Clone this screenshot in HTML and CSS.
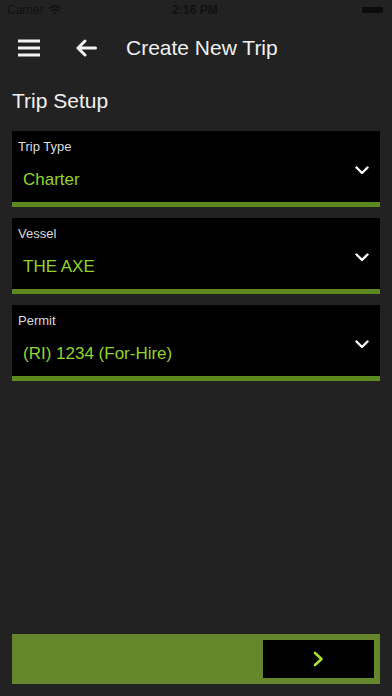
FILE: index.html
```html
<!DOCTYPE html>
<html>
<head>
<meta charset="utf-8">
<link rel="stylesheet" href="styles.css">
</head>
<body>
<div class="screen">
  <div class="status">
    <div class="status-left">Carrier
      <svg class="wifi" width="14" height="10" viewBox="0 0 14 10"><path d="M1 3.5 A9 9 0 0 1 13 3.5" stroke="#111" stroke-width="1.6" fill="none"/><path d="M3.3 5.8 A6 6 0 0 1 10.7 5.8" stroke="#111" stroke-width="1.6" fill="none"/><path d="M7 9.5 L5.2 7.8 A3 3 0 0 1 8.8 7.8 Z" fill="#111"/></svg>
    </div>
    <div class="status-time">2:16 PM</div>
    <div class="status-right"><span class="battery"></span></div>
  </div>
  <div class="nav">
    <svg class="icon-menu" width="22" height="18" viewBox="0 0 22 18"><rect x="0" y="0.5" width="22" height="3" fill="#f2f2f2"/><rect x="0" y="7.5" width="22" height="3" fill="#f2f2f2"/><rect x="0" y="14.5" width="22" height="3" fill="#f2f2f2"/></svg>
    <svg class="icon-back" width="22" height="18" viewBox="0 0 22 18"><path d="M20.5 9 H3 M10 2 L3 9 L10 16" stroke="#f2f2f2" stroke-width="3" fill="none" stroke-linecap="round" stroke-linejoin="round"/></svg>
    <div class="nav-title">Create New Trip</div>
  </div>
  <div class="section-title">Trip Setup</div>
  <div class="fields">
    <div class="field">
      <div class="field-body">
        <div class="field-text">
          <div class="field-label">Trip Type</div>
          <div class="field-value">Charter</div>
        </div>
        <svg class="chev" width="14" height="9" viewBox="0 0 14 9"><path d="M1.5 1.5 L7 7 L12.5 1.5" stroke="#fff" stroke-width="2.4" fill="none" stroke-linecap="round" stroke-linejoin="round"/></svg>
      </div>
    </div>
    <div class="field">
      <div class="field-body">
        <div class="field-text">
          <div class="field-label">Vessel</div>
          <div class="field-value">THE AXE</div>
        </div>
        <svg class="chev" width="14" height="9" viewBox="0 0 14 9"><path d="M1.5 1.5 L7 7 L12.5 1.5" stroke="#fff" stroke-width="2.4" fill="none" stroke-linecap="round" stroke-linejoin="round"/></svg>
      </div>
    </div>
    <div class="field">
      <div class="field-body">
        <div class="field-text">
          <div class="field-label">Permit</div>
          <div class="field-value">(RI) 1234 (For-Hire)</div>
        </div>
        <svg class="chev" width="14" height="9" viewBox="0 0 14 9"><path d="M1.5 1.5 L7 7 L12.5 1.5" stroke="#fff" stroke-width="2.4" fill="none" stroke-linecap="round" stroke-linejoin="round"/></svg>
      </div>
    </div>
  </div>
  <div class="spacer"></div>
  <div class="footer">
    <div class="next-btn">
      <svg width="11" height="16" viewBox="0 0 11 16"><path d="M2 2 L8.5 8 L2 14" stroke="#a6e22e" stroke-width="2.6" fill="none" stroke-linecap="round" stroke-linejoin="round"/></svg>
    </div>
  </div>
</div>
</body>
</html>
```
FILE: styles.css
```css
* { box-sizing: border-box; }
html, body { margin: 0; padding: 0; }
body {
  background: #222222;
  font-family: "Liberation Sans", Arial, sans-serif;
  color: #f2f2f2;
}
.screen {
  width: 392px;
  height: 696px;
  display: flex;
  flex-direction: column;
  padding: 0 12px 12px;
}
.status {
  height: 20px;
  margin: 0 -12px;
  padding: 0 7px;
  display: flex;
  align-items: center;
  font-size: 12px;
  color: #111;
}
.status-left { flex: 1; display: flex; align-items: center; gap: 4px; }
.status-time { flex: 1; text-align: center; font-weight: bold; font-size: 12px; }
.status-right { flex: 1; display: flex; justify-content: flex-end; padding-right: 2px; }
.battery {
  display: block;
  width: 21px;
  height: 6px;
  background: #0c0c0c;
  border-radius: 1.5px;
}
.nav {
  height: 55px;
  display: flex;
  align-items: center;
  padding-top: 1px;
}
.icon-menu { margin-left: 6px; }
.icon-back { margin-left: 35px; }
.nav-title {
  margin-left: 29px;
  font-size: 21px;
  color: #f0f0f0;
}
.section-title {
  font-size: 21px;
  color: #f0f0f0;
  height: 36px;
  padding-top: 16px;
  line-height: 20px;
  margin-bottom: 20px;
}
.fields {
  display: flex;
  flex-direction: column;
  gap: 11px;
}
.field {
  background: #000;
  border-bottom: 5px solid #5d8a1f;
  height: 76px;
}
.field-body {
  display: flex;
  align-items: center;
  height: 100%;
  padding: 0 11px 0 6px;
}
.field-text { flex: 1; }
.field-label {
  font-size: 13px;
  color: #dcdcdc;
  line-height: 16px;
  margin-top: -4px;
}
.field-value {
  font-size: 17px;
  color: #93d42b;
  line-height: 20px;
  margin-top: 15px;
  padding-left: 5px;
}
.chev { margin-top: 8px; }
.spacer { flex: 1; }
.footer {
  height: 50px;
  background: #65862a;
  display: flex;
  justify-content: flex-end;
  align-items: center;
  padding-right: 6px;
}
.next-btn {
  width: 111px;
  height: 38px;
  background: #000;
  display: flex;
  align-items: center;
  justify-content: center;
}
```
